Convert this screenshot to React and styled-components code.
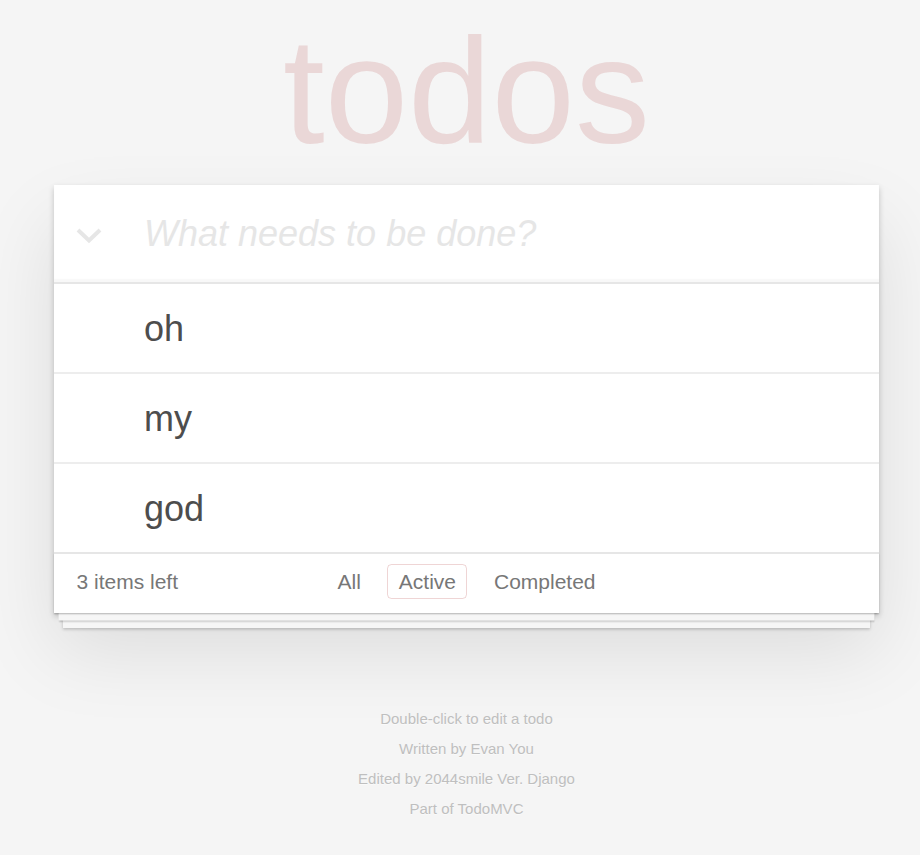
import React from "react";
import styled, { createGlobalStyle } from "styled-components";

const GlobalStyle = createGlobalStyle`
  html, body {
    margin: 0;
    padding: 0;
    background: #f5f5f5;
  }
  body {
    font-family: "Liberation Sans", Arial, sans-serif;
    font-size: 21px;
    line-height: 1.4em;
    color: #4d4d4d;
    -webkit-font-smoothing: antialiased;
  }
`;

const Page = styled.div`
  width: 825px;
  margin-left: 54px;
  padding-top: 16px;
  padding-bottom: 40px;
`;

const Title = styled.h1`
  margin: 0 0 19px;
  font-size: 150px;
  line-height: 1;
  font-weight: 100;
  text-align: center;
  color: rgba(175, 47, 47, 0.15);
`;

const Card = styled.section`
  background: #fff;
  box-shadow: 0 3px 6px 0 rgba(0, 0, 0, 0.2), 0 37.5px 75px 0 rgba(0, 0, 0, 0.1);
`;

const Header = styled.header`
  display: flex;
  align-items: center;
  height: 97px;
  box-shadow: inset 0 -3px 1.5px rgba(0, 0, 0, 0.03);
`;

const ToggleAll = styled.label`
  width: 90px;
  flex: none;
  display: flex;
  align-items: center;
  padding-left: 22px;
  padding-top: 4px;
  box-sizing: border-box;
`;

const NewTodo = styled.input`
  flex: 1;
  border: none;
  outline: none;
  background: transparent;
  padding: 0 24px 0 0;
  font-family: inherit;
  font-size: 36px;
  font-style: italic;
  line-height: 50px;
  color: #4d4d4d;
  &::placeholder {
    color: #e6e6e6;
    font-style: italic;
  }
`;

const List = styled.ul`
  margin: 0;
  padding: 0;
  list-style: none;
  border-top: 2px solid #e6e6e6;
`;

const Item = styled.li`
  border-bottom: ${(p) => (p.$last ? "none" : "2px solid #ededed")};
  font-size: 36px;
  line-height: 1.2;
  padding: 22.5px 90px 22.5px 90px;
  height: ${(p) => (p.$last ? "88px" : "90px")};
  box-sizing: border-box;
  color: #4d4d4d;
`;

const Footer = styled.footer`
  display: grid;
  grid-template-columns: 1fr auto 1fr;
  align-items: center;
  height: 61px;
  box-sizing: border-box;
  padding: 0 22.5px 4px;
  border-top: 2px solid #e6e6e6;
  color: #777;
  font-size: 21px;
  box-shadow: 0 1.5px 1.5px rgba(0, 0, 0, 0.2), 0 12px 0 -4.5px #f6f6f6,
    0 13.5px 1.5px -4.5px rgba(0, 0, 0, 0.2), 0 24px 0 -9px #f6f6f6,
    0 25.5px 3px -9px rgba(0, 0, 0, 0.2);
`;

const Count = styled.span`
  text-align: left;
`;

const Filters = styled.ul`
  display: flex;
  gap: 15px;
  margin: 0;
  padding: 0;
  list-style: none;
`;

const FilterLink = styled.a`
  display: block;
  padding: 4.5px 10.5px;
  line-height: 23.5px;
  color: inherit;
  text-decoration: none;
  border: 1.5px solid ${(p) => (p.$selected ? "rgba(175, 47, 47, 0.2)" : "transparent")};
  border-radius: 4.5px;
  cursor: pointer;
`;

const Info = styled.footer`
  margin-top: 98px;
  display: flex;
  flex-direction: column;
  gap: 15px;
  color: #bfbfbf;
  font-size: 15px;
  line-height: 15px;
  text-align: center;
  text-shadow: 0 1px 0 rgba(255, 255, 255, 0.5);
`;

const InfoLine = styled.p`
  margin: 0;
`;

const todos = ["oh", "my", "god"];

export default function App() {
  return (
    <>
      <GlobalStyle />
      <Page>
        <Title>todos</Title>
        <Card>
          <Header>
            <ToggleAll>
              <svg width="26" height="16" viewBox="0 0 26 16">
                <polyline
                  points="2,2 13,12.5 24,2"
                  fill="none"
                  stroke="#e6e6e6"
                  strokeWidth="4"
                />
              </svg>
            </ToggleAll>
            <NewTodo placeholder="What needs to be done?" />
          </Header>
          <List>
            {todos.map((t, i) => (
              <Item key={t} $last={i === todos.length - 1}>
                {t}
              </Item>
            ))}
          </List>
          <Footer>
            <Count>3 items left</Count>
            <Filters>
              <li>
                <FilterLink>All</FilterLink>
              </li>
              <li>
                <FilterLink $selected>Active</FilterLink>
              </li>
              <li>
                <FilterLink>Completed</FilterLink>
              </li>
            </Filters>
            <span />
          </Footer>
        </Card>
        <Info>
          <InfoLine>Double-click to edit a todo</InfoLine>
          <InfoLine>Written by Evan You</InfoLine>
          <InfoLine>Edited by 2044smile Ver. Django</InfoLine>
          <InfoLine>Part of TodoMVC</InfoLine>
        </Info>
      </Page>
    </>
  );
}
